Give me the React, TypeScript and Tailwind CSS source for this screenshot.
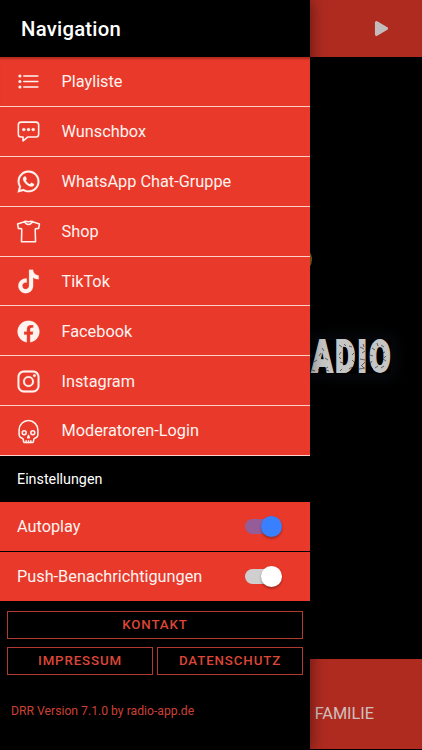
import React from "react";
import {
  IoChatboxEllipsesOutline,
  IoListOutline,
  IoLogoFacebook,
  IoLogoInstagram,
  IoLogoTiktok,
  IoLogoWhatsapp,
  IoPlay,
  IoShirtOutline,
  IoSkullOutline,
} from "react-icons/io5";

const links = [
  { label: "Playliste", icon: IoListOutline },
  { label: "Wunschbox", icon: IoChatboxEllipsesOutline },
  { label: "WhatsApp Chat-Gruppe", icon: IoLogoWhatsapp },
  { label: "Shop", icon: IoShirtOutline },
  { label: "TikTok", icon: IoLogoTiktok },
  { label: "Facebook", icon: IoLogoFacebook },
  { label: "Instagram", icon: IoLogoInstagram },
  { label: "Moderatoren-Login", icon: IoSkullOutline },
];

const Toggle = ({ track, thumb }: { track: string; thumb: string }) => (
  <div className={`relative h-[14.5px] w-9 rounded-full ${track}`}>
    <div
      className={`absolute -top-[3px] left-4 size-[21px] rounded-full shadow-[0_2px_2px_rgba(0,0,0,0.18),0_1px_3px_rgba(0,0,0,0.15)] ${thumb}`}
    />
  </div>
);

// worn print: black scratches over the letters
const Scratches = () => (
  <svg
    className="absolute inset-0 h-full w-full"
    viewBox="0 0 82 34"
    fill="none"
    stroke="#000"
    strokeOpacity="0.75"
    strokeWidth="0.7"
  >
    <path d="M5 22l3-2M9 29l2 2M13 8l2 3M19 27l-3 2M3 30l3 1M16 18l3 2M12 13l-2 3M20 31l-3-1" />
    <path d="M30 5l3 2M32 12l-2 3M31 22l3 1M33 29l-2 2M40 6l3 1M45 13l-2 2M43 20l3 3M40 29l3-2M30 17l2 2M44 27l-2 3M35 4l2 2M46 9l2 1" />
    <path d="M51 7l4 2M53 13l3-2M51 19l5 1M52 25l3 3M56 22l-3 3M50 29l6-1M54 4l1 3" />
    <path d="M63 8l3 2M61 15l3 1M63 21l-2 3M66 28l3-2M72 5l3 2M76 12l-3 1M74 19l3 2M75 26l-3 2M68 3l1 3M62 27l2 2M77 16l-2 2" />
  </svg>
);

const Station = () => (
  <div className="flex h-full w-full flex-col">
    <header className="flex h-[57px] items-center justify-end bg-[#af2b20] pr-[30px]">
      <IoPlay className="size-[21px] text-[#c4bcbc]" />
    </header>

    <main className="flex flex-1 flex-col items-end bg-black">
      <div className="mt-[190px] mr-[110px] h-[25px] w-5 rounded-[50%] border-2 border-[#8a6420]" />
      <div className="relative mt-[68px] mr-[31px] h-[34px] w-[82px] shadow-[0_0_14px_5px_rgba(24,28,44,0.35)]">
        <span className="absolute -right-[1.5px] bottom-0 origin-bottom-right scale-x-[0.7] font-[Roboto] text-[44px] leading-[34px] font-black tracking-[3.4px] text-[#c6c6c6] [-webkit-text-stroke:1.8px_#c6c6c6]">
          RADIO
        </span>
        <Scratches />
      </div>
    </main>

    <footer className="mb-px flex h-[90px] items-center justify-end bg-[#af2b20] pt-[21px] pr-12 text-[16.3px] text-[#cfc0bf]">
      FAMILIE
    </footer>
  </div>
);

const Drawer = () => (
  <nav className="absolute inset-y-0 left-0 flex w-[310px] flex-col bg-black text-white shadow-[2px_0_14px_rgba(0,0,0,0.4)]">
    <h1 className="flex h-[57px] items-center pt-px pl-[21px] text-[20.3px] font-medium tracking-[0.0125em]">
      Navigation
    </h1>

    <ul>
      {links.map(({ label, icon: Icon }) => (
        <li
          key={label}
          className="flex h-[49.9px] items-center gap-[20.5px] border-b border-[#ffd0c8] bg-[#e8392a] pt-px pl-4 text-[16.3px] text-[#fff3f0] first:shadow-[inset_0_3px_2px_-1px_rgba(0,0,0,0.25)]"
        >
          <Icon className="size-[25px] stroke-[4]" />
          <span className="pt-px">{label}</span>
        </li>
      ))}
    </ul>

    <h2 className="flex h-[45.8px] items-center pt-px pl-[17px] text-[14.3px]">
      Einstellungen
    </h2>

    <div className="flex h-[50px] items-center justify-between border-b border-black bg-[#e8392a] pr-[29.5px] pl-[17px] text-[16.3px] text-[#fff3f0]">
      <span className="pt-0.5">Autoplay</span>
      <Toggle track="bg-[#955d97]" thumb="bg-[#3880ff]" />
    </div>
    <div className="flex h-[49px] items-center justify-between bg-[#e8392a] pr-[29.5px] pl-[17px] text-[16.3px] text-[#fff3f0]">
      <span className="pt-0.5">Push-Benachrichtigungen</span>
      <Toggle track="bg-[#cfcfcf]" thumb="bg-white" />
    </div>

    <div className="mt-2.5 grid grid-cols-2 gap-x-1 gap-y-2 px-[7px] text-[13.3px] font-medium tracking-[0.065em] text-[#dc4637]">
      <button className="col-span-2 h-7 border border-[#b03a31] pt-px">
        KONTAKT
      </button>
      <button className="h-7 border border-[#b03a31] pt-px">IMPRESSUM</button>
      <button className="h-7 border border-[#b03a31] pt-px">DATENSCHUTZ</button>
    </div>

    <p className="mt-[27px] pl-[11px] text-[12.2px] text-[#cb4136]">
      DRR Version 7.1.0 by radio-app.de
    </p>
  </nav>
);

const App = () => {
  return (
    <div className="relative h-[750px] w-[422px] overflow-hidden bg-black font-[Roboto,sans-serif]">
      <Station />
      <Drawer />
    </div>
  );
};

export default App;
